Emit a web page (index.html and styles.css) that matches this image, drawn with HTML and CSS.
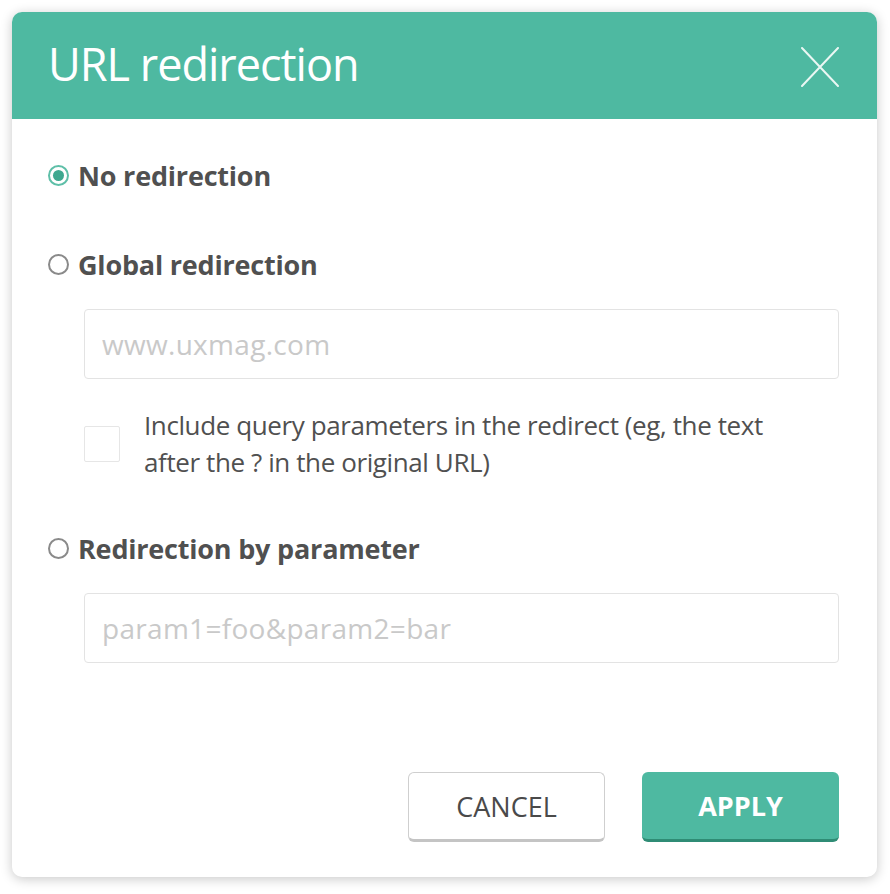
FILE: index.html
```html
<!DOCTYPE html>
<html lang="en">
<head>
    <meta charset="UTF-8">
    <title>URL redirection</title>
    <link rel="stylesheet" href="styles.css">
</head>
<body>
    <!-- Dialog -->
    <div class="dialog">
        <div class="dialog-header">
            <h1 class="dialog-title">URL redirection</h1>
            <button class="close-btn" aria-label="Close">
                <svg width="38" height="40" viewBox="0 0 38 40">
                    <path d="M1 1 L37 39 M37 1 L1 39" stroke="#eaf7f3" stroke-width="2" fill="none" stroke-linecap="round"/>
                </svg>
            </button>
        </div>

        <div class="dialog-body">
            <label class="option option-first">
                <span class="radio checked"></span>
                <span class="option-label">No redirection</span>
            </label>

            <label class="option">
                <span class="radio"></span>
                <span class="option-label">Global redirection</span>
            </label>
            <div class="field">
                <input type="text" class="text-input" placeholder="www.uxmag.com">
            </div>
            <label class="check-row">
                <span class="checkbox"></span>
                <span class="check-label">Include query parameters in the redirect (eg, the text after the ? in the original URL)</span>
            </label>

            <label class="option option-last">
                <span class="radio"></span>
                <span class="option-label">Redirection by parameter</span>
            </label>
            <div class="field">
                <input type="text" class="text-input" placeholder="param1=foo&amp;param2=bar">
            </div>

            <div class="actions">
                <button class="btn btn-cancel">CANCEL</button>
                <button class="btn btn-apply">APPLY</button>
            </div>
        </div>
    </div>
</body>
</html>
```

FILE: styles.css
```css
* {
    box-sizing: border-box;
    margin: 0;
    padding: 0;
    font-family: 'Open Sans', 'Liberation Sans', sans-serif;
}

body {
    background: #ffffff;
    width: 890px;
    height: 894px;
    overflow: hidden;
}

/* Dialog */
.dialog {
    margin: 12px;
    width: 865px;
    height: 865px;
    background: #ffffff;
    border-radius: 10px;
    box-shadow: 0 2px 12px rgba(0, 0, 0, 0.22);
    overflow: hidden;
    display: flex;
    flex-direction: column;
}

.dialog-header {
    background: #4eb9a1;
    height: 107px;
    display: flex;
    align-items: center;
    justify-content: space-between;
    padding: 0 38px 0 36px;
}

.dialog-title {
    color: #ffffff;
    font-size: 45px;
    font-weight: 400;
    letter-spacing: -1px;
    line-height: 1;
    margin-top: -4px;
}

.close-btn {
    background: none;
    border: none;
    display: flex;
    cursor: pointer;
    margin-top: 2px;
}

/* Body */
.dialog-body {
    flex: 1;
    display: flex;
    flex-direction: column;
    padding: 41px 38px 35px 36px;
}

.option {
    display: flex;
    align-items: center;
    gap: 9px;
    height: 30px;
    margin-top: 59px;
    cursor: pointer;
}

.option-first {
    margin-top: 0;
}

.option-last {
    margin-top: 52px;
}

.option-label {
    font-size: 27px;
    font-weight: 700;
    color: #505050;
    letter-spacing: -0.2px;
}

.radio {
    width: 21px;
    height: 21px;
    border-radius: 50%;
    border: 2px solid #8a8a8a;
    display: flex;
    align-items: center;
    justify-content: center;
    flex-shrink: 0;
}

.radio.checked {
    border: 2px solid #5ebfa8;
}

.radio.checked::after {
    content: "";
    width: 11px;
    height: 11px;
    border-radius: 50%;
    background: #3ea88f;
}

.field {
    margin: 30px 0 0 36px;
}

.text-input {
    width: 100%;
    height: 70px;
    border: 1.5px solid #e3e3e3;
    border-radius: 4px;
    padding: 0 17px;
    font-size: 28px;
    letter-spacing: 0.3px;
    color: #505050;
    outline: none;
}

.text-input::placeholder {
    color: #c9c9c9;
}

.check-row {
    display: flex;
    align-items: center;
    gap: 24px;
    margin: 28px 0 0 36px;
}

.checkbox {
    width: 36px;
    height: 36px;
    border: 1.5px solid #e6e6e6;
    border-radius: 2px;
    flex-shrink: 0;
}

.check-label {
    font-size: 26px;
    line-height: 37px;
    color: #505050;
    max-width: 660px;
    letter-spacing: -0.4px;
}

/* Buttons */
.actions {
    margin-top: auto;
    display: flex;
    justify-content: flex-end;
    gap: 37px;
}

.btn {
    width: 197px;
    height: 70px;
    border-radius: 6px;
    font-size: 27px;
    cursor: pointer;
}

.btn-cancel {
    background: #ffffff;
    border: 1.5px solid #cfcfcf;
    border-bottom: 3px solid #c4c4c4;
    color: #4a4a4a;
    font-weight: 400;
}

.btn-apply {
    background: #4eb9a1;
    border: none;
    border-bottom: 3px solid #2f8c75;
    color: #ffffff;
    font-weight: 700;
}
```
